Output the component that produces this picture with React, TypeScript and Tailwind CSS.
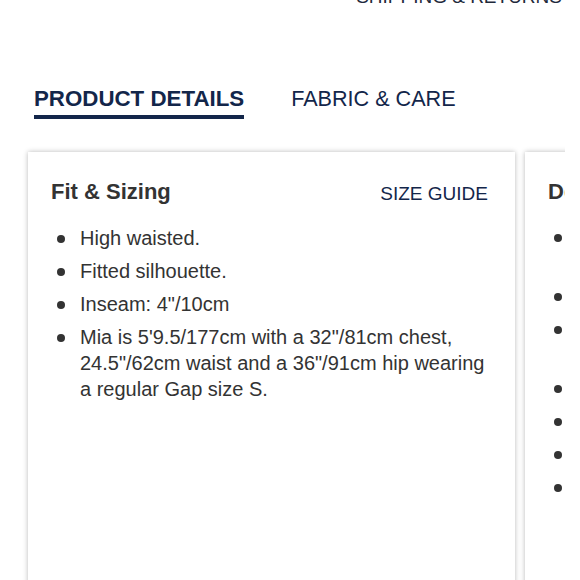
import React from "react";

const navy = "text-[#13264a]";

function Bullet() {
  return <span className="mt-[10px] h-[8px] w-[8px] shrink-0 rounded-full bg-[#333]" />;
}

function Card({ title, link, items }: { title: string; link?: string; items: React.ReactNode[] }) {
  return (
    <div className="h-[520px] w-[487px] shrink-0 bg-white px-[23px] pt-[29px] shadow-[0_0_5px_rgba(0,0,0,0.28)]">
      <div className="flex items-baseline justify-between pr-[4px]">
        <h3 className="text-[22px] font-bold leading-[22px] text-[#333]">{title}</h3>
        {link && <a className={`text-[19px] leading-[22px] translate-y-[1px] ${navy}`}>{link}</a>}
      </div>
      <ul className="mt-[21px] flex flex-col gap-[7px] pl-[6px]">
        {items.map((t, i) => (
          <li key={i} className="flex gap-[15px] text-[20px] leading-[26px] text-[#333]">
            <Bullet />
            <span>{t}</span>
          </li>
        ))}
      </ul>
    </div>
  );
}

export default function App() {
  return (
    <div className="relative h-[580px] w-[580px] overflow-hidden bg-white font-['Liberation_Sans',Arial,sans-serif]">
      <div className="-mt-[13px] flex justify-end pr-[18px]">
        <a className="text-[19px] leading-[19px] text-[#1f2a3c]">SHIPPING &amp; RETURNS</a>
      </div>
      <div className="mt-[82px] flex gap-[47px] pl-[34px]">
        <div className={`border-b-[4px] border-[#13264a] pb-[5px] text-[22.3px] font-bold leading-[22px] ${navy}`}>
          PRODUCT DETAILS
        </div>
        <div className={`text-[21.6px] leading-[22px] ${navy}`}>FABRIC &amp; CARE</div>
      </div>
      <div className="mt-[27px] w-[565px] overflow-hidden pt-[6px]">
        <div className="flex gap-[10px] pl-[28px]">
          <Card
            title="Fit & Sizing"
            link="SIZE GUIDE"
            items={[
              "High waisted.",
              "Fitted silhouette.",
              "Inseam: 4\"/10cm",
              "Mia is 5'9.5/177cm with a 32\"/81cm chest, 24.5\"/62cm waist and a 36\"/91cm hip wearing a regular Gap size S.",
            ]}
          />
          <Card
            title="Details"
            items={[
              <>Made with organic cotton, grown<br />without harmful chemicals.</>,
              "Button closure.",
              <>Front slant pockets, back<br />patch pockets.</>,
              "Frayed hem.",
              "Belt loops.",
              "Zip fly.",
              "Imported.",
            ]}
          />
        </div>
      </div>
    </div>
  );
}
